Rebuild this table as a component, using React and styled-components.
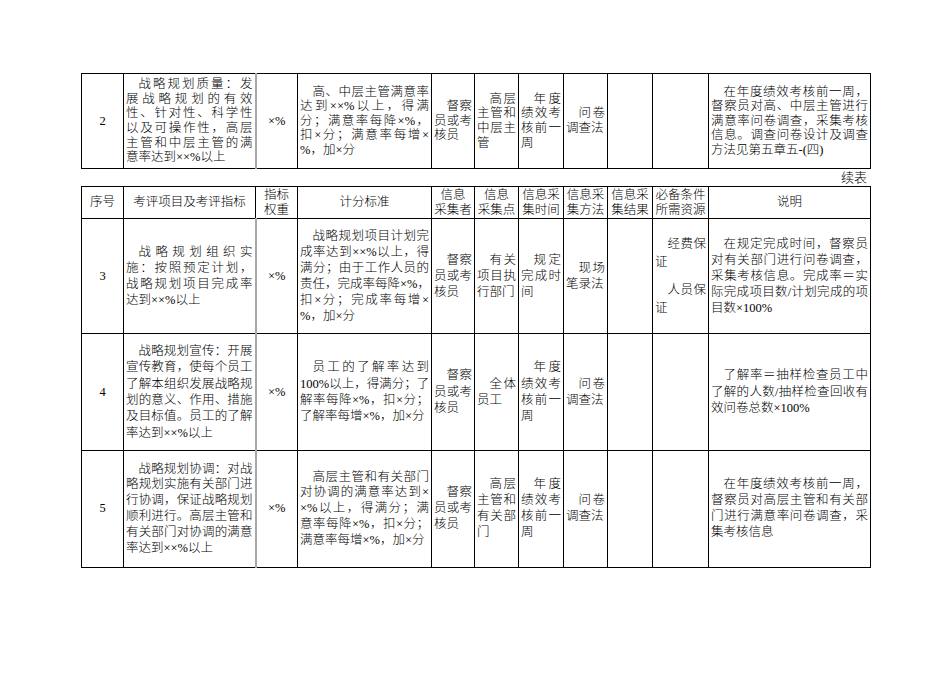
import React from "react";
import styled, { createGlobalStyle } from "styled-components";

const GlobalStyle = createGlobalStyle`
  html, body {
    margin: 0;
    padding: 0;
    background: #fff;
  }
  body {
    font-family: "Liberation Serif", "Noto Sans CJK SC", serif;
    font-weight: 300;
    color: #000;
  }
`;

const Page = styled.div`
  width: 788px;
  padding: 73px 0 0 81px;
`;

const Sheet = styled.table`
  width: 788px;
  table-layout: fixed;
  border-collapse: collapse;
  font-size: 12.5px;
`;

const Row = styled.tr`
  height: ${(p) => p.$h}px;
  line-height: ${(p) => p.$lh || 15.5}px;
`;

const Cell = styled.td`
  border: 1px solid #000;
  padding: 0 2px;
  vertical-align: middle;
  text-align: ${(p) => (p.$center ? "center" : "left")};
  overflow: visible;
  ${(p) => p.$soft && "border-left: 2px solid #a8a8a8;"}
`;

const HeadCell = styled.th`
  border: 1px solid #000;
  padding: 0 1px;
  font-weight: 300;
  text-align: center;
  vertical-align: middle;
  line-height: 15px;
  white-space: nowrap;
`;

const Line = styled.div`
  white-space: nowrap;
  text-align: justify;
  text-align-last: ${(p) => (p.$last ? "left" : "justify")};
  text-indent: ${(p) => (p.$indent ? "1em" : "0")};
`;

const Block = styled.div`
  line-height: ${(p) => p.$lh || "inherit"};
  & + & {
    margin-top: ${(p) => p.$gap || 0}px;
  }
`;

const Continued = styled.div`
  height: 17px;
  line-height: 17px;
  text-align: right;
  font-size: 13px;
  padding-right: 2px;
`;

const widths = [42, 132, 42, 134, 43, 44, 45, 44, 45, 56, 162];

const headers = [
  ["序号"],
  ["考评项目及考评指标"],
  ["指标", "权重"],
  ["计分标准"],
  ["信息", "采集者"],
  ["信息", "采集点"],
  ["信息采", "集时间"],
  ["信息采", "集方法"],
  ["信息采", "集结果"],
  ["必备条件", "所需资源"],
  ["说明"],
];

const Para = ({ lines }) => (
  <>
    {lines.map((t, i) => (
      <Line key={i} $indent={i === 0} $last={i === lines.length - 1}>
        {t}
      </Line>
    ))}
  </>
);

const first = {
  no: "2",
  h: 95,
  lh: 14.6,
  item: [
    "战略规划质量：发",
    "展战略规划的有效",
    "性、针对性、科学性",
    "以及可操作性，高层",
    "主管和中层主管的满",
    "意率达到××%以上",
  ],
  rule: [
    "高、中层主管满意率",
    "达到××%以上，得满",
    "分；满意率每降×%，",
    "扣×分；满意率每增×",
    "%，加×分",
  ],
  who: ["督察", "员或考", "核员"],
  where: ["高层", "主管和", "中层主", "管"],
  when: ["年度", "绩效考", "核前一", "周"],
  how: ["问卷", "调查法"],
  need: null,
  note: [
    "在年度绩效考核前一周，",
    "督察员对高、中层主管进行",
    "满意率问卷调查，采集考核",
    "信息。调查问卷设计及调查",
    "方法见第五章五-(四)",
  ],
};

const rows = [
  {
    no: "3",
    h: 115,
    lh: 16,
    item: ["战略规划组织实", "施：按照预定计划，", "战略规划项目完成率", "达到××%以上"],
    rule: [
      "战略规划项目计划完",
      "成率达到××%以上，得",
      "满分；由于工作人员的",
      "责任，完成率每降×%，",
      "扣×分；完成率每增×",
      "%，加×分",
    ],
    who: ["督察", "员或考", "核员"],
    where: ["有关", "项目执", "行部门"],
    when: ["规定", "完成时", "间"],
    how: ["现场", "笔录法"],
    need: [
      ["经费保", "证"],
      ["人员保", "证"],
    ],
    note: [
      "在规定完成时间，督察员",
      "对有关部门进行问卷调查，",
      "采集考核信息。完成率＝实",
      "际完成项目数/计划完成的项",
      "目数×100%",
    ],
  },
  {
    no: "4",
    h: 117,
    lh: 16.4,
    item: [
      "战略规划宣传：开展",
      "宣传教育，使每个员工",
      "了解本组织发展战略规",
      "划的意义、作用、措施",
      "及目标值。员工的了解",
      "率达到××%以上",
    ],
    rule: [
      "员工的了解率达到",
      "100%以上，得满分；了",
      "解率每降×%，扣×分；",
      "了解率每增×%，加×分",
    ],
    who: ["督察", "员或考", "核员"],
    where: ["全体", "员工"],
    when: ["年度", "绩效考", "核前一", "周"],
    how: ["问卷", "调查法"],
    need: null,
    note: ["了解率＝抽样检查员工中", "了解的人数/抽样检查回收有", "效问卷总数×100%"],
  },
  {
    no: "5",
    h: 117,
    lh: 15.8,
    item: [
      "战略规划协调：对战",
      "略规划实施有关部门进",
      "行协调，保证战略规划",
      "顺利进行。高层主管和",
      "有关部门对协调的满意",
      "率达到××%以上",
    ],
    rule: [
      "高层主管和有关部门",
      "对协调的满意率达到×",
      "×%以上，得满分；满",
      "意率每降×%，扣×分；",
      "满意率每增×%，加×分",
    ],
    who: ["督察", "员或考", "核员"],
    where: ["高层", "主管和", "有关部", "门"],
    when: ["年度", "绩效考", "核前一", "周"],
    how: ["问卷", "调查法"],
    need: null,
    note: ["在年度绩效考核前一周，", "督察员对高层主管和有关部", "门进行满意率问卷调查，采", "集考核信息"],
  },
];

const Cols = () => (
  <colgroup>
    {widths.map((w, i) => (
      <col key={i} style={{ width: w }} />
    ))}
  </colgroup>
);

const BodyRow = ({ r }) => (
  <Row $h={r.h} $lh={r.lh}>
    <Cell $center>{r.no}</Cell>
    <Cell>
      <Para lines={r.item} />
    </Cell>
    <Cell $center $soft>
      ×%
    </Cell>
    <Cell>
      <Para lines={r.rule} />
    </Cell>
    <Cell>
      <Para lines={r.who} />
    </Cell>
    <Cell>
      <Para lines={r.where} />
    </Cell>
    <Cell>
      <Para lines={r.when} />
    </Cell>
    <Cell>
      <Para lines={r.how} />
    </Cell>
    <Cell />
    <Cell>
      {r.need &&
        r.need.map((p, i) => (
          <Block key={i} $lh="18px" $gap={10}>
            <Para lines={p} />
          </Block>
        ))}
    </Cell>
    <Cell>
      <Para lines={r.note} />
    </Cell>
  </Row>
);

export default function App() {
  return (
    <Page>
      <GlobalStyle />
      <Sheet>
        <Cols />
        <tbody>
          <BodyRow r={first} />
        </tbody>
      </Sheet>
      <Continued>续表</Continued>
      <Sheet>
        <Cols />
        <thead>
          <Row $h={32}>
            {headers.map((h, i) => (
              <HeadCell key={i}>
                {h.map((t, j) => (
                  <div key={j}>{t}</div>
                ))}
              </HeadCell>
            ))}
          </Row>
        </thead>
        <tbody>
          {rows.map((r) => (
            <BodyRow key={r.no} r={r} />
          ))}
        </tbody>
      </Sheet>
    </Page>
  );
}
